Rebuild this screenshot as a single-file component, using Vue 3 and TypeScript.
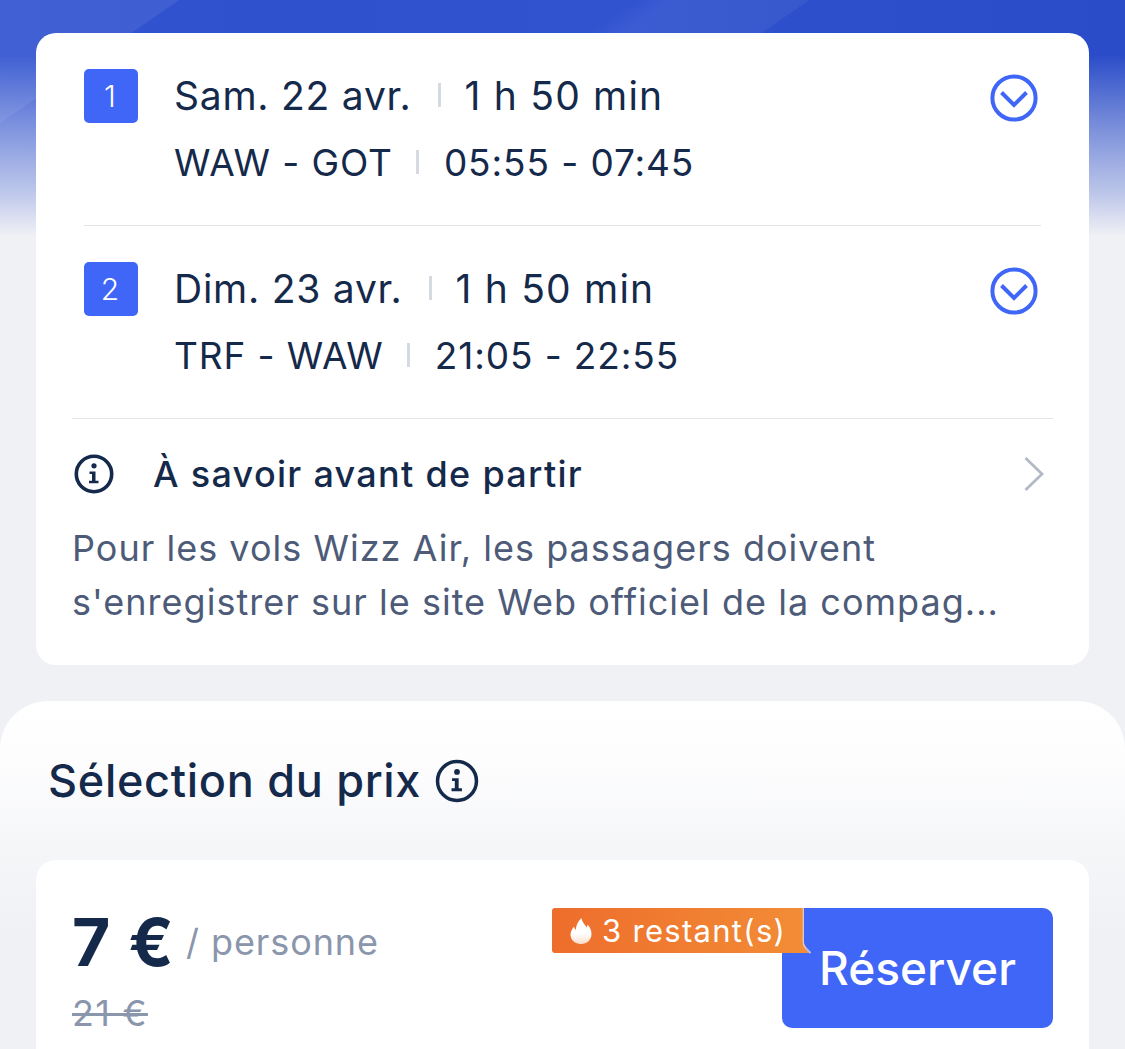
<script setup lang="ts">
interface Leg { n: number; date: string; dur: string; route: string; time: string }
const legs: Leg[] = [
  { n: 1, date: 'Sam. 22 avr.', dur: '1 h 50 min', route: 'WAW - GOT', time: '05:55 - 07:45' },
  { n: 2, date: 'Dim. 23 avr.', dur: '1 h 50 min', route: 'TRF - WAW', time: '21:05 - 22:55' },
]
</script>

<template>
  <div class="page">
    <div class="hero"></div>
    <section class="card">
      <div v-for="leg in legs" :key="leg.n" class="leg">
        <div class="num">{{ leg.n }}</div>
        <div class="leg-body">
          <div class="line one"><span>{{ leg.date }}</span><i class="sep"></i><span class="dur">{{ leg.dur }}</span></div>
          <div class="line two"><span>{{ leg.route }}</span><i class="sep"></i><span>{{ leg.time }}</span></div>
        </div>
        <svg class="chev" width="48" height="48" viewBox="0 0 48 48" fill="none" stroke="#3f66f6">
          <circle cx="24" cy="24" r="21.6" stroke-width="4" />
          <path d="M11.500 18.500 L24 31 L36.500 18.500" stroke-width="4" />
        </svg>
      </div>
      <div class="notice">
        <div class="notice-head">
          <svg class="info" width="40" height="40" viewBox="0 0 40 40" fill="none">
            <circle cx="20" cy="20" r="17.700" stroke="#15294b" stroke-width="3.600" />
            <circle cx="20" cy="11.800" r="2.600" fill="#15294b" />
            <path d="M15.500 17.500h6v9.200h3v2.600h-9.500v-2.600h3v-6.600h-2.500z" fill="#15294b" />
          </svg>
          <span class="notice-title">À savoir avant de partir</span>
          <svg class="arrow" width="24" height="38" viewBox="0 0 24 38" fill="none" stroke="#b3bac6" stroke-width="2.800">
            <path d="M3.500 3 L20 19 L3.500 35" />
          </svg>
        </div>
        <p class="notice-text">Pour les vols Wizz Air, les passagers doivent<br />s'enregistrer sur le site Web officiel de la compag...</p>
      </div>
    </section>

    <section class="sheet">
      <h2 class="sheet-title">Sélection du prix
        <svg width="44" height="44" viewBox="0 0 40 40" fill="none">
          <circle cx="20" cy="20" r="17.700" stroke="#15294b" stroke-width="3.200" />
          <circle cx="20" cy="11.800" r="2.600" fill="#15294b" />
          <path d="M15.500 17.500h6v9.200h3v2.600h-9.500v-2.600h3v-6.600h-2.500z" fill="#15294b" />
        </svg>
      </h2>
      <div class="price-card">
        <div class="price-col">
          <div class="price"><b>7 €</b><span>/ personne</span></div>
          <s class="old">21 €</s>
        </div>
        <div class="action">
          <button class="book">Réserver</button>
          <div class="tag">
            <svg class="flame" width="24" height="28" viewBox="0 0 24 28">
              <defs>
                <linearGradient id="fl" x1="0" y1="0" x2="0" y2="1">
                  <stop offset="0.6" stop-color="#fff" />
                  <stop offset="1" stop-color="#fbdccb" />
                </linearGradient>
              </defs>
              <path d="M12.500 1c.6 4.500 3.500 6 5 9.500.7-.8 1-1.800 1.100-3 2.600 2.700 3.900 6 3.900 9.500 0 6-4.500 10-10.500 10S1.500 23 1.500 17.500c0-3.500 2-5.500 3.500-8 .3 1.500.8 2.500 1.900 3.300C7 8.500 9 4 12.500 1z" fill="url(#fl)" />
            </svg>
            <span>3 restant(s)</span>
            <svg class="fold" width="12" height="46" viewBox="0 0 12 46">
              <path d="M0 0 H.5 V34 C.5 38 3 40 8 45 H0 Z" fill="#f28c36" />
              <path d="M1.200 0 V34 C1.200 38 3.500 40 8.500 45" fill="none" stroke="#f3c6a0" stroke-width="1.600" />
              <path d="M4 40.500 L8.500 45" fill="none" stroke="#a9b8f2" stroke-width="1.800" />
            </svg>
          </div>
        </div>
      </div>
    </section>
  </div>
</template>

<style>
html, body { margin: 0; background: #f0f1f5; }
</style>

<style scoped>
.page {
  position: relative;
  width: 1125px;
  height: 1049px;
  overflow: hidden;
  background: #f0f1f5;
  font-family: Inter, "Noto Sans", sans-serif;
  color: #15294b;
}
.hero {
  position: absolute;
  inset: 0 0 auto 0;
  height: 236px;
  background:
    linear-gradient(180deg, rgba(240,241,245,0) 0, rgba(240,241,245,0) 55px, rgba(240,241,245,.14) 80px, rgba(240,241,245,.42) 130px, rgba(240,241,245,.75) 195px, #f0f1f5 236px),
    linear-gradient(145.5deg, rgba(255,255,255,.07) 0 101px, rgba(255,255,255,0) 102px),
    linear-gradient(145.5deg, rgba(255,255,255,0) 360px, rgba(255,255,255,.05) 380px 458px, rgba(255,255,255,0) 459px),
    linear-gradient(90deg, #3254d0 0, #2f51ce 280px, #3153d0 620px, #2d4fcb 800px, #2a4cc8 1125px);
}
.card {
  position: relative;
  margin: 33px 36px 0;
  height: 632px;
  box-sizing: border-box;
  background: #fff;
  border-radius: 20px;
  padding: 0 36px;
}
.leg {
  display: flex;
  align-items: flex-start;
  height: 193px;
  box-sizing: border-box;
  margin: 0 12px;
  padding-top: 36px;
  border-bottom: 1px solid #e2e4e8;
  position: relative;
}
.leg:nth-child(2) { margin: 0; padding-left: 12px; padding-right: 12px; }
.num {
  width: 54px;
  height: 54px;
  border-radius: 5px;
  background: #3f66f6;
  color: #fff;
  font-size: 30px;
  font-weight: 300;
  display: flex;
  align-items: center;
  justify-content: center;
  flex: none;
  padding-right: 2px;
  box-sizing: border-box;
}
.leg-body { margin-left: 36px; flex: 1; }
.line { display: flex; align-items: center; white-space: nowrap; }
.one { font-size: 39px; height: 54px; letter-spacing: 0.75px; margin-top: -1px; }
.dur { letter-spacing: 1.200px; }
.two { font-size: 37px; height: 54px; margin-top: 13px; letter-spacing: 0.9px; }
.sep { width: 3px; height: 24px; background: #d5d9e0; }
.one .sep { margin: 0 24px 0 26px; }
.two .sep { margin: 0 25px 0 23px; }
.chev { flex: none; margin: 5px 3px 0 0; }
.notice { padding-top: 30px; }
.notice-head { display: flex; align-items: center; height: 50px; }
.info { margin-left: 2px; flex: none; }
.notice-title { margin-left: 39px; font-size: 36px; font-weight: 500; flex: 1; letter-spacing: 1.300px; }
.arrow { margin-right: 7px; margin-top: -1px; }
.notice-text {
  margin: 22px 0 0;
  font-size: 36px;
  line-height: 54px;
  color: #4d5b78;
  white-space: nowrap;
  letter-spacing: 1.020px;
}
.sheet {
  position: absolute;
  left: 0;
  top: 701px;
  width: 1125px;
  height: 348px;
  border-radius: 48px 48px 0 0;
  background: linear-gradient(180deg, #fff 0, #fdfdfe 60px, #f5f6f8 150px, #f0f1f5 230px);
}
.sheet-title {
  margin: 0;
  padding: 53px 0 0 48px;
  display: flex;
  align-items: center;
  gap: 14px;
  font-size: 45px;
  font-weight: 500;
  line-height: 54px;
  letter-spacing: 0.7px;
}
.price-card {
  position: absolute;
  left: 36px;
  top: 159px;
  width: 1053px;
  height: 240px;
  border-radius: 20px;
  background: #fff;
  box-sizing: border-box;
  padding: 48px 36px 0;
  display: flex;
  justify-content: space-between;
}
.price { display: flex; align-items: center; gap: 11px; height: 72px; margin-top: -2px; }
.price b { font-size: 66px; font-weight: 700; line-height: 72px; letter-spacing: 1.300px; }
.price span { font-size: 36px; color: #8a96ab; letter-spacing: 0.9px; }
.old { display: block; margin-top: 13px; font-size: 36px; color: #8a96ab; letter-spacing: 1.300px; }
.action { position: relative; width: 271px; height: 120px; }
.book {
  display: block;
  width: 100%;
  height: 100%;
  border: 0;
  border-radius: 10px;
  background: #3f66f6;
  color: #fff;
  font-family: inherit;
  font-size: 46px;
  font-weight: 500;
  padding: 0;
}
.tag {
  position: absolute;
  width: 250px;
  left: -230px;
  top: 0;
  height: 45px;
  border-radius: 3px 0 0 3px;
  background: linear-gradient(90deg, #ee6d2c, #f28c36);
  color: #fff;
  font-size: 31px;
  letter-spacing: 1.300px;
  display: flex;
  align-items: center;
  gap: 9px;
  padding-left: 17px;
  box-sizing: border-box;
  white-space: nowrap;
}
.flame { flex: none; }
.fold {
  position: absolute;
  left: 250px;
  top: 0;
}
</style>
